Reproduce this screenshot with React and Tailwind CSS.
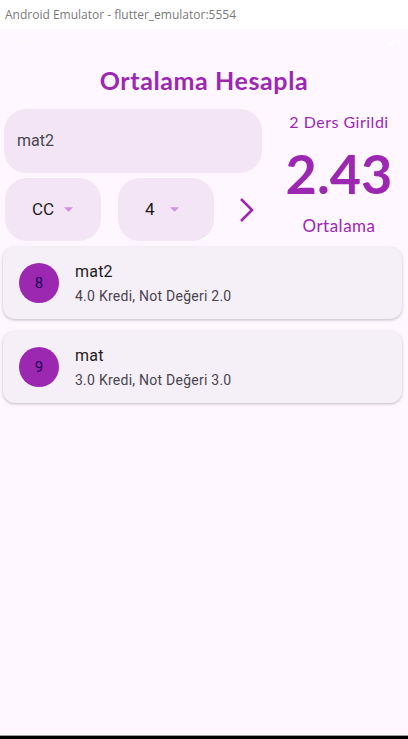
import React from 'react';

const quick = { fontFamily: 'Lato, "Noto Sans", sans-serif' };
const roboto = { fontFamily: 'Roboto, "Noto Sans", sans-serif' };

const Caret = ({ gap }) => (
  <svg width="9" height="5" viewBox="0 0 10 5" className={gap}>
    <path d="M0 0h10L5 5z" fill="#ce93d8" />
  </svg>
);

const DropBox = ({ label, pad, gap }) => (
  <div className={`flex h-[63px] w-[96px] items-center rounded-[22px] bg-[#f3e5f5] ${pad}`}>
    <span className="text-[17px] text-[#1d1b20]" style={roboto}>{label}</span>
    <Caret gap={gap} />
  </div>
);

const CourseCard = ({ num, name, kredi, not }) => (
  <div className="flex h-[72px] items-center rounded-[12px] bg-[#f5eff7] pl-[16px] shadow-[0_1px_3px_rgba(0,0,0,0.25)]">
    <div className="flex h-[40px] w-[40px] items-center justify-center rounded-full bg-[#9c27b0] text-[15px] text-[#21005d]" style={roboto}>
      {num}
    </div>
    <div className="ml-[16px] flex flex-col" style={roboto}>
      <span className="text-[16px] leading-[22px] tracking-[0.2px] text-[#1d1b20]">{name}</span>
      <span className="mt-[3px] text-[14px] leading-[20px] tracking-[0.25px] text-[#49454f]">{kredi} Kredi, Not Değeri {not}</span>
    </div>
  </div>
);

export default function App() {
  return (
    <div className="flex h-[739px] w-[408px] flex-col overflow-hidden bg-[#fef7ff]">
      {/* window title */}
      <div className="flex h-[29px] items-center bg-white pl-[5px] text-[12px] text-[#7a7a7a]" style={{ fontFamily: '"Open Sans", "Noto Sans", sans-serif' }}>
        Android Emulator - flutter_emulator:5554
      </div>

      {/* status bar (faint) */}
      <div className="flex h-[27px] items-center justify-between px-[6px] text-[11px] text-[#fdfbfe]" style={roboto}>
        <span>9:49 ▪</span>
        <span>LTE ◢ ▮</span>
      </div>

      {/* app title */}
      <div className="flex h-[53px] items-center justify-center pb-[3px]">
        <h1 className="text-[25px] font-bold tracking-[0.6px] text-[#9c27b0]" style={quick}>Ortalama Hesapla</h1>
      </div>

      {/* form + average */}
      <div className="flex">
        <div className="flex w-[270px] flex-col pl-[4px]">
          <div className="flex h-[64px] w-[258px] items-center rounded-[22px] bg-[#f3e5f5] pl-[13px]">
            <span className="text-[16px] text-[#49454f]" style={roboto}>mat2</span>
          </div>
          <div className="mt-[5px] flex items-center">
            <DropBox label="CC" pad="ml-[1px] pl-[27px]" gap="ml-[10px]" />
            <div className="w-[17px]" />
            <DropBox label="4" pad="pl-[27px]" gap="ml-[15px]" />
            <svg width="20" height="28" viewBox="0 0 20 28" className="ml-[23px]">
              <path d="M4 3l11 11L4 25" fill="none" stroke="#9c27b0" strokeWidth="2.6" />
            </svg>
          </div>
        </div>
        <div className="flex flex-1 flex-col items-center pt-[2px]" style={quick}>
          <span className="text-[16px] leading-[22px] tracking-[0.5px] text-[#9c27b0]">2 Ders Girildi</span>
          <span className="mt-[12px] text-[54px] font-bold leading-[58px] text-[#9c27b0]">2.43</span>
          <span className="mt-[12px] text-[17px] leading-[22px] tracking-[0.5px] text-[#9c27b0]">Ortalama</span>
        </div>
      </div>

      {/* list */}
      <div className="mt-[6px] flex flex-col gap-[12px] pl-[3px] pr-[6px]">
        <CourseCard num="8" name="mat2" kredi="4.0" not="2.0" />
        <CourseCard num="9" name="mat" kredi="3.0" not="3.0" />
      </div>

      <div className="flex-1" />
      <div className="h-[1px] bg-[#9a9a9a]" />
      <div className="h-[3px] bg-black" />
    </div>
  );
}
